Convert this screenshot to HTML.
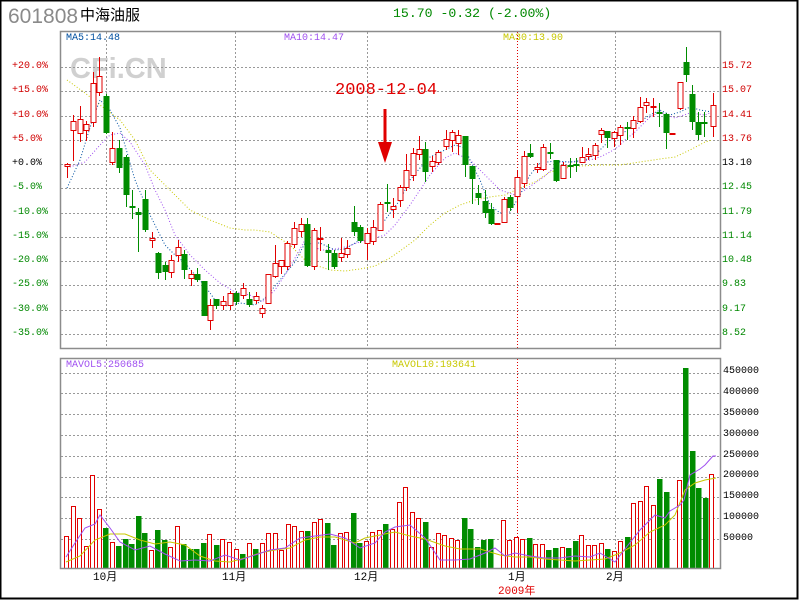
<!DOCTYPE html>
<html><head><meta charset="utf-8"><style>
html,body{margin:0;padding:0;background:#fff;}
#w{position:relative;width:800px;height:600px;overflow:hidden;background:#fff;}
.t{position:absolute;white-space:nowrap;font-family:"Liberation Mono","Noto Sans CJK SC",monospace;font-size:10px;line-height:12px;}
</style></head><body><div id="w">
<svg id="s" width="800" height="600" style="position:absolute;left:0;top:0">
<rect x="0.5" y="0.5" width="797" height="598" fill="none" stroke="#000" stroke-width="2"/>
<text x="70" y="78" font-family="Liberation Sans,sans-serif" font-weight="bold" font-size="29" fill="#d0d0d0">CFi.CN</text>
<g id="g"></g>
<rect x="60.5" y="31.5" width="660" height="317" fill="none" stroke="#8c8c8c" stroke-width="1.5"/>
<rect x="60.5" y="358.5" width="660" height="210" fill="none" stroke="#8c8c8c" stroke-width="1.5"/>
</svg>
<div class="t" style="left:8px;top:6px;font-family:'Liberation Sans',sans-serif;font-size:21px;line-height:22px;color:#8a8a8a">601808</div>
<div class="t" style="left:80px;top:7px;font-family:'Liberation Sans','Noto Sans CJK SC',sans-serif;font-size:15px;line-height:18px;color:#000">中海油服</div>
<div class="t" style="left:393px;top:6px;font-size:13.2px;line-height:16px;color:#008800">15.70 -0.32 (-2.00%)</div>
<div class="t" style="left:66px;top:33px;color:#0050a0">MA5:14.48</div>
<div class="t" style="left:284px;top:33px;color:#a050f0">MA10:14.47</div>
<div class="t" style="left:503px;top:33px;color:#c8c800">MA30:13.90</div>
<div class="t" style="left:66px;top:360px;color:#a050f0">MAVOL5:250685</div>
<div class="t" style="left:392px;top:360px;color:#c8c800">MAVOL10:193641</div>
<div class="t" style="left:335px;top:81px;font-size:17px;line-height:20px;color:#e00000">2008-12-04</div>
<div class="t" style="left:93px;top:572px;font-size:11px;color:#000">10月</div>
<div class="t" style="left:222px;top:572px;font-size:11px;color:#000">11月</div>
<div class="t" style="left:354px;top:572px;font-size:11px;color:#000">12月</div>
<div class="t" style="left:508px;top:572px;font-size:11px;color:#000">1月</div>
<div class="t" style="left:606px;top:572px;font-size:11px;color:#000">2月</div>
<div class="t" style="left:498px;top:586px;font-size:11px;color:#e00000">2009年</div>
<div class="t" style="left:12px;top:61px;color:#d00000">+20.0%</div>
<div class="t" style="left:12px;top:85px;color:#d00000">+15.0%</div>
<div class="t" style="left:12px;top:110px;color:#d00000">+10.0%</div>
<div class="t" style="left:12px;top:134px;color:#d00000">+5.0%</div>
<div class="t" style="left:12px;top:158px;color:#000">+0.0%</div>
<div class="t" style="left:12px;top:182px;color:#008800">-5.0%</div>
<div class="t" style="left:12px;top:207px;color:#008800">-10.0%</div>
<div class="t" style="left:12px;top:231px;color:#008800">-15.0%</div>
<div class="t" style="left:12px;top:255px;color:#008800">-20.0%</div>
<div class="t" style="left:12px;top:279px;color:#008800">-25.0%</div>
<div class="t" style="left:12px;top:304px;color:#008800">-30.0%</div>
<div class="t" style="left:12px;top:328px;color:#008800">-35.0%</div>
<div class="t" style="left:722px;top:61px;color:#d00000">15.72</div>
<div class="t" style="left:722px;top:85px;color:#d00000">15.07</div>
<div class="t" style="left:722px;top:110px;color:#d00000">14.41</div>
<div class="t" style="left:722px;top:134px;color:#d00000">13.76</div>
<div class="t" style="left:722px;top:158px;color:#000">13.10</div>
<div class="t" style="left:722px;top:182px;color:#008800">12.45</div>
<div class="t" style="left:722px;top:207px;color:#008800">11.79</div>
<div class="t" style="left:722px;top:231px;color:#008800">11.14</div>
<div class="t" style="left:722px;top:255px;color:#008800">10.48</div>
<div class="t" style="left:722px;top:279px;color:#008800">9.83</div>
<div class="t" style="left:722px;top:304px;color:#008800">9.17</div>
<div class="t" style="left:722px;top:328px;color:#008800">8.52</div>
<div class="t" style="left:723px;top:366px;color:#000">450000</div>
<div class="t" style="left:723px;top:387px;color:#000">400000</div>
<div class="t" style="left:723px;top:408px;color:#000">350000</div>
<div class="t" style="left:723px;top:429px;color:#000">300000</div>
<div class="t" style="left:723px;top:450px;color:#000">250000</div>
<div class="t" style="left:723px;top:470px;color:#000">200000</div>
<div class="t" style="left:723px;top:491px;color:#000">150000</div>
<div class="t" style="left:723px;top:512px;color:#000">100000</div>
<div class="t" style="left:723px;top:533px;color:#000">50000</div>
</div>
<script>
var NS="http://www.w3.org/2000/svg",g=document.getElementById("g");
function el(n,a){var e=document.createElementNS(NS,n);for(var k in a)e.setAttribute(k,a[k]);g.appendChild(e);return e;}
var R="#e00000",G="#008c00";
for(var k=0;k<12;k++){var y=Math.round(67+k*24.27)+.5;el("line",{x1:61,x2:720,y1:y,y2:y,stroke:"#999","stroke-dasharray":"2,2"});}
for(var k=0;k<9;k++){var y=Math.round(372.5+k*20.8)+.5;el("line",{x1:61,x2:720,y1:y,y2:y,stroke:"#999","stroke-dasharray":"2,2"});}
[106.5,235.5,367.5,615.5].forEach(function(x){el("line",{x1:x,x2:x,y1:32,y2:348,stroke:"#999","stroke-dasharray":"2,2"});el("line",{x1:x,x2:x,y1:359,y2:568,stroke:"#999","stroke-dasharray":"2,2"});});
el("line",{x1:517.5,x2:517.5,y1:32,y2:348,stroke:"#e00000","stroke-dasharray":"1,2"});
el("line",{x1:517.5,x2:517.5,y1:359,y2:568,stroke:"#e00000","stroke-dasharray":"1,2"});
function pl(pts,c,d,w){el("polyline",{points:pts.map(function(p){return p.join(",")}).join(" "),fill:"none",stroke:c,"stroke-width":w||1,"stroke-dasharray":d||""});}
pl([[67,80],[85,93],[100,105],[120,120],[135,140],[150,170],[170,190],[190,210],[210,220],[230,228],[245,230],[255,230],[270,232],[290,245],[305,260],[315,265],[330,270],[345,271],[360,269],[375,266],[390,258],[400,251],[415,240],[430,225],[445,213],[460,205],[475,200],[490,197],[505,195],[520,188],[535,182],[550,172],[565,168],[580,166],[600,165],[620,165],[640,162],[660,159],[675,157],[690,150],[705,142],[712,140]],"#c8c800","1,2");
pl([[67,168],[85,162],[100,145],[110,135],[120,133],[130,142],[145,165],[155,190],[165,210],[175,235],[190,255],[205,270],[220,283],[235,292],[250,295],[262,302],[275,290],[285,275],[295,258],[305,240],[320,250],[330,250],[345,247],[360,242],[375,238],[385,235],[395,225],[410,205],[420,190],[430,175],[445,158],[455,153],[470,160],[480,170],[490,180],[500,190],[515,195],[525,190],[535,183],[545,176],[560,162],[575,162],[590,160],[600,157],[610,152],[618,147],[625,140],[635,132],[650,117],[660,112],[675,118],[690,113],[705,115],[712,112]],"#a050f0","1,2");
pl([[67,188],[80,160],[93,118],[100,100],[110,110],[120,128],[135,180],[150,215],[165,245],[175,255],[185,263],[195,275],[205,286],[215,300],[225,306],[240,303],[255,305],[265,298],[280,280],[295,262],[305,243],[320,243],[335,250],[345,249],[360,240],[370,236],[385,220],[400,200],[410,180],[420,168],[430,157],[445,150],[455,145],[465,148],[470,160],[480,180],[490,205],[500,213],[510,212],[520,195],[530,175],[540,163],[555,161],[570,162],[585,160],[595,155],[610,140],[620,135],[635,125],[650,115],[660,110],[670,115],[680,112],[690,107],[700,110],[712,112]],"#0050a0","1,2");
var C=[[67,164,166,163,178,1],[73,121,130,115,161,1],[79.5,119,133,106,142,1],[86,124,130,121,141,1],[93,83,122,72,127,1],[99,76,92,57,96,1],[106,96,133,94,134,0],[112,148,162,132,165,1],[119,148,168,140,173,0],[126,157,195,155,207,0],[132,206,207,190,219,0],[138,212,215,208,252,0],[145,199,230,190,232,0],[152,238,240,232,248,1],[158,253,273,252,279,0],[165,265,272,262,280,0],[171,260,272,255,278,1],[178,247,255,240,262,1],[184,254,270,250,279,0],[191,274,278,270,286,1],[197,274,280,268,282,0],[204,281,316,281,316,0],[210,305,320,299,330,1],[216,299,306,299,309,0],[223,301,305,296,310,1],[230,293,305,291,310,1],[236,293,302,291,305,0],[243,288,295,283,299,1],[249,299,305,292,307,0],[256,296,300,292,304,1],[262,308,313,305,318,1],[268,274,303,274,303,1],[275,263,276,245,278,1],[281,260,266,260,274,1],[287,243,266,241,270,1],[294,228,244,222,248,1],[301,224,231,218,237,1],[307,224,266,218,267,0],[314,230,266,228,270,1],[320,238,239,227,251,1],[328,250,253,244,270,0],[334,253,267,250,269,0],[341,253,257,238,262,1],[347,248,254,240,258,1],[354,222,232,206,236,0],[360,227,241,225,243,0],[367,233,243,228,260,1],[373,227,241,220,245,1],[380,204,230,202,230,1],[387,202,204,184,212,0],[393,206,209,198,218,1],[400,187,200,185,207,1],[406,170,187,154,191,1],[413,153,175,148,181,1],[419,149,154,136,160,1],[425,149,172,142,182,0],[432,161,166,156,172,1],[438,152,162,150,165,1],[446,139,146,130,150,1],[452,132,140,130,152,1],[458,135,143,130,155,1],[465,136,165,136,177,0],[472,166,179,166,204,0],[478,193,198,185,205,0],[485,201,213,190,218,0],[491,209,224,203,225,0],[497,223,224,223,224,1],[504,199,222,197,223,1],[510,197,208,195,211,0],[517,177,196,171,212,1],[524,156,183,151,188,1],[530,153,157,144,158,0],[537,167,169,163,173,1],[543,147,169,144,171,1],[550,152,153,143,159,0],[556,160,181,160,182,0],[563,165,178,162,179,1],[570,165,167,158,178,0],[576,164,165,158,172,0],[582,157,162,147,163,1],[588,154,156,148,160,1],[595,145,155,143,160,1],[601,130,134,128,143,1],[607,131,138,131,148,0],[614,132,138,131,147,1],[620,127,135,125,145,1],[627,127,128,122,140,0],[633,120,128,116,138,1],[640,107,121,97,123,1],[646,102,105,98,113,1],[653,106,107,98,117,1],[659,112,113,103,127,0],[666,114,133,113,149,0],[672,133,134,133,134,1],[680,82,108,82,110,1],[686,62,75,47,82,0],[692,94,122,85,130,0],[698,122,135,112,140,0],[704,122,123,112,137,0],[713,105,126,93,137,1]];
C.forEach(function(c){var x=Math.round(c[0]),col=c[5]?R:G;
 el("line",{x1:x+.5,x2:x+.5,y1:c[3],y2:c[4],stroke:col});
 var h=Math.max(c[2]-c[1],1);
 if(c[5])el("rect",{x:x-2,y:c[1]+.5,width:5,height:h,fill:"#fff",stroke:col});
 else el("rect",{x:x-2.5,y:c[1],width:6,height:Math.max(h,2),fill:col});
});
el("rect",{x:383.5,y:109,width:3,height:36,fill:R});
el("polygon",{points:"378,142 392,142 385,163",fill:R});
var V=[[229,1],[139,1],[175,1],[259,1],[46,1],[148,1],[204,0],[247,1],[258,0],[237,0],[252,0],[168,0],[219,0],[271,1],[210,0],[240,0],[262,1],[199,1],[252,0],[268,0],[268,0],[248,0],[223,1],[255,0],[238,1],[246,1],[268,1],[282,0],[250,1],[267,0],[250,1],[220,1],[220,1],[271,1],[193,1],[199,1],[214,1],[212,0],[186,1],[177,1],[189,0],[255,0],[220,1],[215,1],[159,0],[249,0],[244,1],[215,1],[211,1],[192,0],[207,1],[127,1],[81,1],[157,1],[175,1],[186,0],[260,1],[220,1],[224,1],[235,1],[239,1],[174,0],[208,0],[262,0],[240,0],[237,0],[null],[180,1],[240,1],[230,1],[237,1],[233,0],[251,1],[252,1],[270,0],[264,0],[261,1],[263,0],[243,0],[226,1],[256,1],[256,1],[250,1],[267,0],[274,1],[242,1],[231,0],[128,1],[122,1],[78,1],[135,1],[57,0],[96,0],[null],[60,1],[-207,0],[-20,0],[84,0],[114,0],[43,1]];
V.forEach(function(v,i){if(v[0]==null)return;var x=64+i*6.52,top=460+v[0]/3;
 if(v[0]==-207)top=368;if(v[0]==-20)top=451;
 if(v[1])el("rect",{x:Math.round(x)+.5,y:Math.round(top)+.5,width:4,height:568-Math.round(top),fill:"#fff",stroke:R});
 else el("rect",{x:Math.round(x),y:Math.round(top),width:5.5,height:569-Math.round(top),fill:G});
});
pl([[66,562],[80,556],[95,540],[110,534],[125,534],[140,540],[155,544],[170,542],[185,545],[200,556],[215,561],[230,562],[245,558],[260,553],[275,550],[290,548],[305,540],[320,537],[335,537],[345,540],[355,543],[365,538],[380,535],[395,532],[410,536],[425,539],[445,546],[460,549],[480,549],[500,555],[515,557],[530,557],[545,559],[560,560],[575,561],[590,560],[605,559],[620,553],[635,545],[650,532],[665,525],[675,515],[685,490],[695,483],[705,480],[716,478]],"#c8c800");
pl([[66,557],[75,543],[85,528],[95,524],[100,515],[110,528],[120,542],[135,550],[150,546],[165,554],[180,561],[195,560],[210,561],[225,555],[240,560],[255,555],[270,550],[285,548],[300,538],[315,536],[330,534],[345,538],[360,548],[375,543],[385,532],[395,527],[410,525],[425,538],[440,560],[455,560],[470,559],[485,553],[495,548],[505,556],[515,553],[530,556],[545,558],[560,558],[575,556],[590,557],[600,553],[615,562],[625,549],[640,530],[655,515],[665,518],[670,511],[680,505],[684,500],[690,475],[700,469],[705,465],[713,456],[716,456]],"#a050f0");
</script>
</body></html>
